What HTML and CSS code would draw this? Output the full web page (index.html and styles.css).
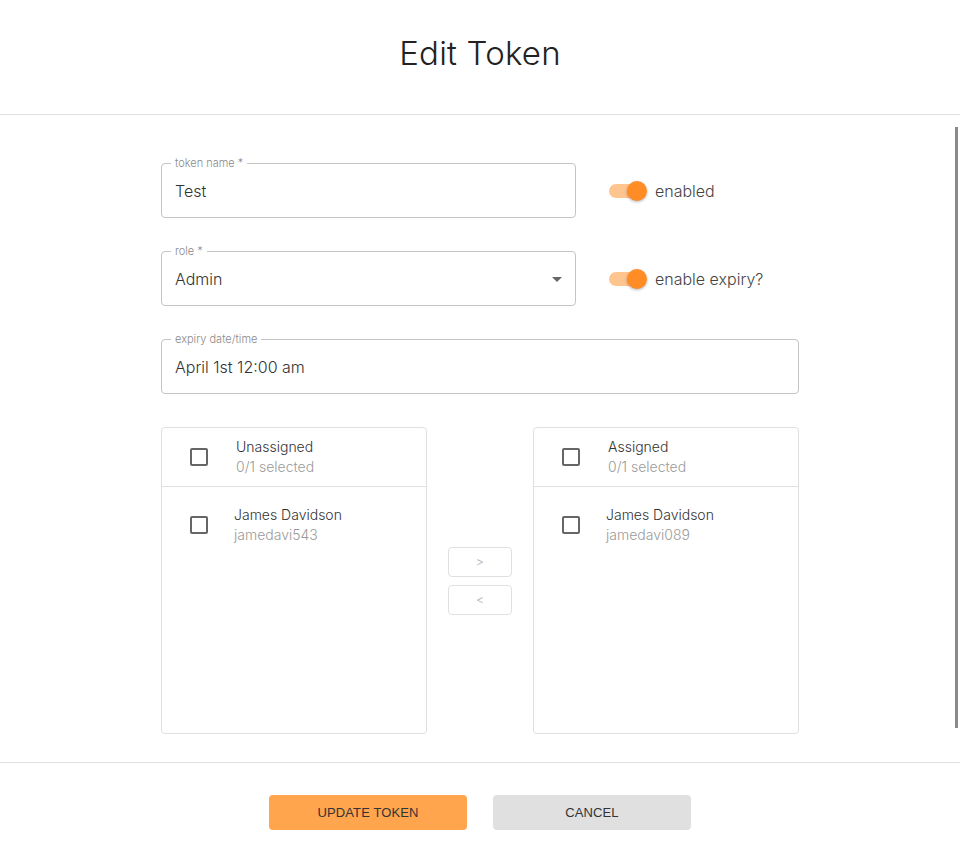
FILE: index.html
```html
<!DOCTYPE html>
<html lang="en">
<head>
<meta charset="utf-8">
<title>Edit Token</title>
<link rel="stylesheet" href="styles.css">
</head>
<body>
<div class="dialog">
  <header class="header">
    <h1 class="title">Edit Token</h1>
  </header>
  <main class="content">
    <div class="form">
      <div class="row">
        <div class="field field-half">
          <span class="field-label">token name *</span>
          <span class="field-value">Test</span>
        </div>
        <div class="switch">
          <span class="switch-track"><span class="switch-thumb"></span></span>
          <span class="switch-label">enabled</span>
        </div>
      </div>
      <div class="row">
        <div class="field field-half">
          <span class="field-label">role *</span>
          <span class="field-value">Admin</span>
          <span class="caret"></span>
        </div>
        <div class="switch">
          <span class="switch-track"><span class="switch-thumb"></span></span>
          <span class="switch-label">enable expiry?</span>
        </div>
      </div>
      <div class="row">
        <div class="field field-full">
          <span class="field-label">expiry date/time</span>
          <span class="field-value">April 1st 12:00 am</span>
        </div>
      </div>
      <div class="transfer">
        <section class="list">
          <div class="list-head">
            <span class="checkbox"></span>
            <div class="list-text">
              <span class="primary">Unassigned</span>
              <span class="secondary">0/1 selected</span>
            </div>
          </div>
          <div class="list-body">
            <div class="list-item">
              <span class="checkbox"></span>
              <div class="list-text">
                <span class="primary">James Davidson</span>
                <span class="secondary">jamedavi543</span>
              </div>
            </div>
          </div>
        </section>
        <div class="moves">
          <button class="move">&gt;</button>
          <button class="move">&lt;</button>
        </div>
        <section class="list">
          <div class="list-head">
            <span class="checkbox"></span>
            <div class="list-text">
              <span class="primary">Assigned</span>
              <span class="secondary">0/1 selected</span>
            </div>
          </div>
          <div class="list-body">
            <div class="list-item">
              <span class="checkbox"></span>
              <div class="list-text">
                <span class="primary">James Davidson</span>
                <span class="secondary">jamedavi089</span>
              </div>
            </div>
          </div>
        </section>
      </div>
    </div>
    <div class="scroll-thumb"></div>
  </main>
  <footer class="footer">
    <button class="btn btn-primary">UPDATE TOKEN</button>
    <button class="btn btn-secondary">CANCEL</button>
  </footer>
</div>
</body>
</html>
```
FILE: styles.css
```css
* { box-sizing: border-box; }
html, body { margin: 0; padding: 0; background: #fff; }
body {
  font-family: Inter, "Open Sans", sans-serif;
  color: #333;
  width: 960px;
  height: 855px;
  overflow: hidden;
}
.dialog {
  height: 855px;
  display: flex;
  flex-direction: column;
}
.header {
  height: 115px;
  border-bottom: 1px solid #e0e0e0;
  display: flex;
  justify-content: center;
  padding-top: 31px;
}
.title {
  margin: 0;
  font-size: 33px;
  font-weight: 300;
  color: #222;
  line-height: 44px;
  letter-spacing: 0.2px;
}
.content {
  position: relative;
  height: 648px;
  padding-top: 48px;
  border-bottom: 1px solid #e0e0e0;
}
.form {
  width: 638px;
  margin: 0 auto;
  display: flex;
  flex-direction: column;
  gap: 33px;
}
.row {
  display: flex;
  align-items: center;
  height: 55px;
}
.field {
  position: relative;
  height: 55px;
  border: 1px solid #c4c4c4;
  border-radius: 4px;
  display: flex;
  align-items: center;
  padding-left: 13px;
}
.field-half { width: 415px; }
.field-full { width: 638px; }
.field-label {
  position: absolute;
  top: -7px;
  left: 9px;
  padding: 0 4px;
  background: #fff;
  font-size: 11px;
  line-height: 12px;
  color: #8a8a8a;
  font-weight: 300;
}
.field-value {
  font-size: 16px;
  color: #333;
  font-weight: 300;
}
.caret {
  position: absolute;
  right: 13px;
  top: 25px;
  width: 0;
  height: 0;
  border-left: 5px solid transparent;
  border-right: 5px solid transparent;
  border-top: 5px solid #666;
}
.switch {
  display: flex;
  align-items: center;
  margin-left: 33px;
}
.switch-track {
  position: relative;
  width: 34px;
  height: 14px;
  border-radius: 7px;
  background: #ffc58f;
}
.switch-thumb {
  position: absolute;
  right: -4px;
  top: -3px;
  width: 20px;
  height: 20px;
  border-radius: 50%;
  background: #ff8c24;
  box-shadow: 0 1px 3px rgba(0,0,0,0.3);
}
.switch-label {
  margin-left: 12px;
  font-size: 16px;
  color: #444;
  font-weight: 300;
}
.transfer {
  display: flex;
  height: 307px;
}
.list {
  width: 266px;
  border: 1px solid #e0e0e0;
  border-radius: 4px;
  display: flex;
  flex-direction: column;
}
.list-head {
  height: 59px;
  border-bottom: 1px solid #e0e0e0;
  display: flex;
  align-items: center;
  padding-left: 28px;
}
.list-body { padding-top: 9px; }
.list-item {
  height: 58px;
  display: flex;
  align-items: center;
  padding-left: 28px;
}
.list-item .list-text { margin-left: 26px; }
.checkbox {
  width: 18px;
  height: 18px;
  border: 2px solid #666;
  border-radius: 2px;
  flex: none;
}
.list-text {
  margin-left: 28px;
  display: flex;
  flex-direction: column;
  font-size: 14px;
  line-height: 20px;
  font-weight: 300;
}
.primary { color: #333; }
.secondary { color: #9a9a9a; }
.moves {
  flex: 1;
  display: flex;
  flex-direction: column;
  align-items: center;
  justify-content: center;
  gap: 8px;
}
.move {
  width: 64px;
  height: 30px;
  border: 1px solid #e0e0e0;
  border-radius: 4px;
  background: #fff;
  color: #bdbdbd;
  font-family: Inter, sans-serif;
  font-size: 12px;
  padding: 0;
}
.scroll-thumb {
  position: absolute;
  right: 2px;
  top: 12px;
  width: 3px;
  height: 601px;
  background: #8a8a8a;
}
.footer {
  flex: 1;
  display: flex;
  justify-content: center;
  gap: 26px;
  padding-top: 32px;
}
.btn {
  width: 198px;
  height: 35px;
  border: none;
  border-radius: 4px;
  font-family: "Liberation Sans", Arial, sans-serif;
  font-size: 13px;
  letter-spacing: 0.1px;
  color: #333;
  padding: 0;
}
.btn-primary { background: #ffa54e; }
.btn-secondary { background: #e0e0e0; }
```
